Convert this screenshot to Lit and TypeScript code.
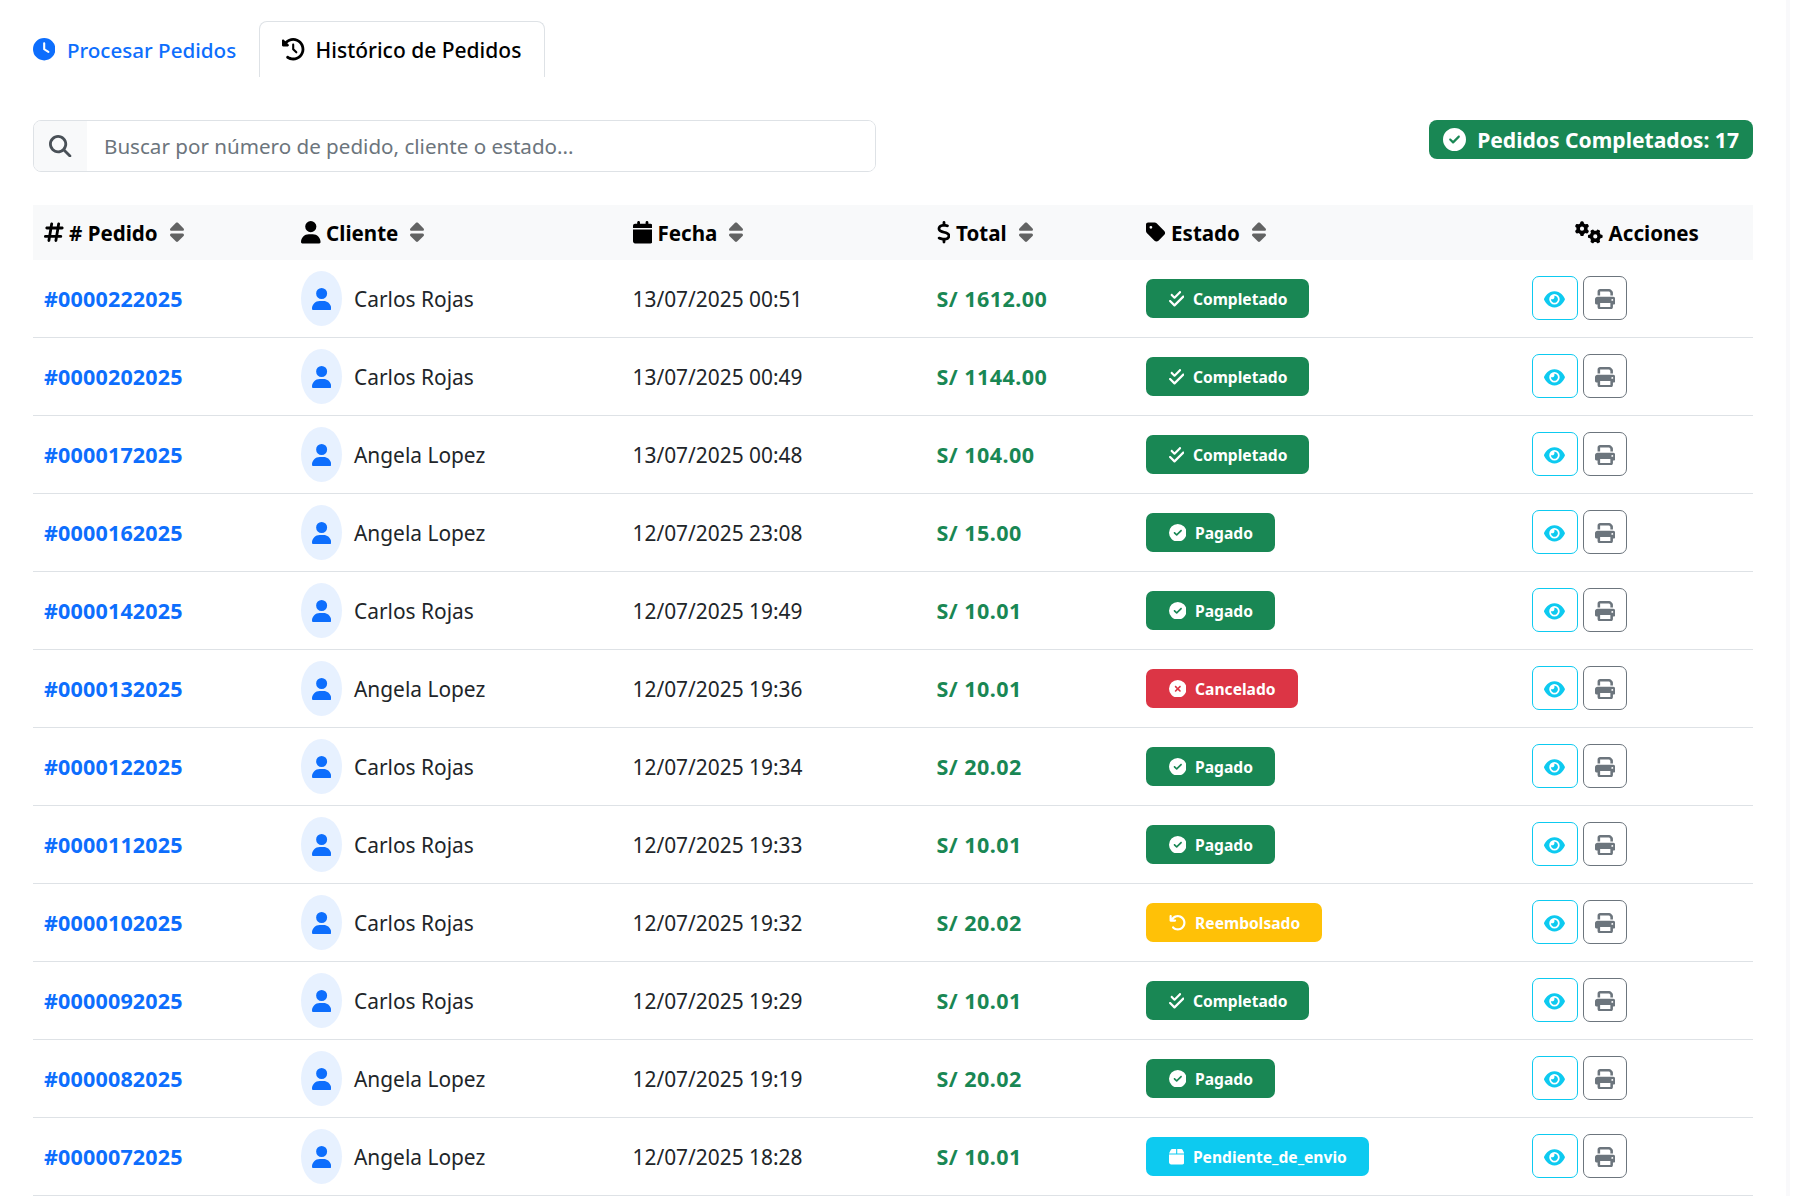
import { LitElement, html, css, svg } from "lit";
import { customElement } from "lit/decorators.js";

type Ico = [number, string];
const I: Record<string, Ico> = {
  clock: [512, "M256 0a256 256 0 1 1 0 512A256 256 0 1 1 256 0zM232 120V256c0 8 4 15.5 10.7 20l96 64c11 7.4 25.9 4.4 33.3-6.7s4.4-25.9-6.7-33.3L280 243.2V120c0-13.3-10.7-24-24-24s-24 10.7-24 24z"],
  history: [512, "M75 75L41 41C25.9 25.9 0 36.6 0 57.9V168c0 13.3 10.7 24 24 24H134.1c21.4 0 32.1-25.9 17-41l-30.8-30.8C155 85.5 203 64 256 64c106 0 192 86 192 192s-86 192-192 192c-40.8 0-78.6-12.7-109.7-34.4c-14.5-10.1-34.4-6.6-44.6 7.9s-6.6 34.4 7.9 44.6C151.2 495 201.7 512 256 512c141.4 0 256-114.6 256-256S397.4 0 256 0C185.3 0 121.3 28.7 75 75zm181 53c-13.3 0-24 10.7-24 24V256c0 6.4 2.5 12.5 7 17l72 72c9.4 9.4 24.6 9.4 33.9 0s9.4-24.6 0-33.9l-65-65V152c0-13.3-10.7-24-24-24z"],
  search: [512, "M416 208c0 45.9-14.9 88.3-40 122.7L502.6 457.4c12.5 12.5 12.5 32.8 0 45.3s-32.8 12.5-45.3 0L330.7 376c-34.4 25.2-76.8 40-122.7 40C93.1 416 0 322.9 0 208S93.1 0 208 0S416 93.1 416 208zM208 352a144 144 0 1 0 0-288 144 144 0 1 0 0 288z"],
  hash: [448, "M181.3 32.4c17.4 2.9 29.2 19.4 26.3 36.8L197.8 128h95.1l11.5-69.3c2.9-17.4 19.4-29.2 36.8-26.3s29.2 19.4 26.3 36.8L357.8 128H416c17.7 0 32 14.3 32 32s-14.3 32-32 32H347.1L325.8 320H384c17.7 0 32 14.3 32 32s-14.3 32-32 32H315.1l-11.5 69.3c-2.9 17.4-19.4 29.2-36.8 26.3s-29.2-19.4-26.3-36.8l9.8-58.7H155.1l-11.5 69.3c-2.9 17.4-19.4 29.2-36.8 26.3s-29.2-19.4-26.3-36.8L90.2 384H32c-17.7 0-32-14.3-32-32s14.3-32 32-32h68.9l21.3-128H64c-17.7 0-32-14.3-32-32s14.3-32 32-32h68.9l11.5-69.3c2.9-17.4 19.4-29.2 36.8-26.3zM187.1 192L165.8 320h95.1l21.3-128H187.1z"],
  user: [448, "M224 256A128 128 0 1 0 224 0a128 128 0 1 0 0 256zm-45.7 48C79.8 304 0 383.8 0 482.3C0 498.7 13.3 512 29.7 512H418.3c16.4 0 29.7-13.3 29.7-29.7C448 383.8 368.2 304 269.7 304H178.3z"],
  calendar: [448, "M96 32V64H48C21.5 64 0 85.5 0 112v48H448V112c0-26.5-21.5-48-48-48H352V32c0-17.7-14.3-32-32-32s-32 14.3-32 32V64H160V32c0-17.7-14.3-32-32-32S96 14.3 96 32zM448 192H0V464c0 26.5 21.5 48 48 48H400c26.5 0 48-21.5 48-48V192z"],
  dollar: [320, "M160 0c17.7 0 32 14.3 32 32V67.7c1.6 .2 3.1 .4 4.7 .7c.4 .1 .7 .1 1.1 .2l48 8.8c17.4 3.2 28.9 19.9 25.7 37.2s-19.9 28.9-37.2 25.7l-47.5-8.7c-31.3-4.6-58.9-1.5-78.3 6.2s-27.2 18.3-29 28.1c-2 10.7-.5 16.7 1.2 20.4c1.8 3.9 5.5 8.3 12.8 13.2c16.3 10.7 41.3 17.7 73.7 26.3l2.9 .8c28.6 7.6 63.6 16.8 89.6 33.8c14.2 9.3 27.6 21.9 35.9 39.5c8.5 17.9 10.3 37.9 6.4 59.2c-6.9 38-33.1 63.4-65.6 76.7c-13.7 5.6-28.6 9.2-44.4 11V480c0 17.7-14.3 32-32 32s-32-14.3-32-32V445.1c-.4-.1-.9-.1-1.3-.2l-.2 0 0 0c-24.4-3.8-64.5-14.3-91.5-26.3c-16.1-7.2-23.4-26.1-16.2-42.2s26.1-23.4 42.2-16.2c20.9 9.3 55.3 18.5 75.2 21.6c31.9 4.7 58.2 2 76-5.3c16.9-6.9 24.6-16.9 26.8-28.9c1.9-10.6 .4-16.7-1.3-20.4c-1.9-4-5.6-8.4-13-13.3c-16.4-10.7-41.5-17.7-74-26.3l-2.8-.7 0 0C119.4 279.3 84.4 270 58.4 253c-14.2-9.3-27.5-22-35.8-39.6c-8.4-17.9-10.1-37.9-6.1-59.2C23.7 116 52.3 91.2 84.8 78.3c13.3-5.3 27.9-8.9 43.2-11V32c0-17.7 14.3-32 32-32z"],
  tag: [448, "M0 80V229.5c0 17 6.7 33.3 18.7 45.3l176 176c25 25 65.5 25 90.5 0L418.7 317.3c25-25 25-65.5 0-90.5l-176-176c-12-12-28.3-18.7-45.3-18.7H48C21.5 32 0 53.5 0 80zm112 32a32 32 0 1 1 0 64 32 32 0 1 1 0-64z"],
  gears: [640, "M308.5 135.3c7.1-6.3 9.9-16.2 6.2-25c-2.3-5.3-4.8-10.5-7.6-15.5L304 89.4c-3-5-6.3-9.9-9.8-14.6c-5.7-7.6-15.7-10.1-24.7-7.1l-28.2 9.3c-10.7-8.8-23-16-36.2-20.9L199 27.1c-1.9-9.3-9.1-16.7-18.5-17.8C173.9 8.4 167.2 8 160.4 8h-.7c-6.8 0-13.5 .4-20.1 1.2c-9.4 1.1-16.6 8.6-18.5 17.8L115 56.1c-13.3 5-25.5 12.1-36.2 20.9L50.5 67.8c-9-3-19-.5-24.7 7.1c-3.5 4.7-6.8 9.6-9.9 14.6l-3 5.3c-2.8 5-5.3 10.2-7.6 15.6c-3.7 8.7-.9 18.6 6.2 25l22.2 19.8C32.6 161.9 32 168.9 32 176s.6 14.1 1.7 20.9L11.5 216.7c-7.1 6.3-9.9 16.2-6.2 25c2.3 5.3 4.8 10.5 7.6 15.6l3 5.2c3 5.1 6.3 9.9 9.9 14.6c5.7 7.6 15.7 10.1 24.7 7.1l28.2-9.3c10.7 8.8 23 16 36.2 20.9l6.1 29.1c1.9 9.3 9.1 16.7 18.5 17.8c6.7 .8 13.5 1.2 20.4 1.2s13.7-.4 20.4-1.2c9.4-1.1 16.6-8.6 18.5-17.8l6.1-29.1c13.3-5 25.5-12.1 36.2-20.9l28.2 9.3c9 3 19 .5 24.7-7.1c3.5-4.7 6.8-9.5 9.8-14.6l3.1-5.4c2.8-5 5.3-10.2 7.6-15.5c3.7-8.7 .9-18.6-6.2-25l-22.2-19.8c1.1-6.8 1.7-13.8 1.7-20.9s-.6-14.1-1.7-20.9l22.2-19.8zM112 176a48 48 0 1 1 96 0 48 48 0 1 1 -96 0zM504.7 500.5c6.3 7.1 16.2 9.9 25 6.2c5.3-2.3 10.5-4.8 15.5-7.6l5.4-3.1c5-3 9.9-6.3 14.6-9.8c7.6-5.7 10.1-15.7 7.1-24.7l-9.3-28.2c8.8-10.7 16-23 20.9-36.2l29.1-6.1c9.3-1.9 16.7-9.1 17.8-18.5c.8-6.7 1.2-13.5 1.2-20.4s-.4-13.7-1.2-20.4c-1.1-9.4-8.6-16.6-17.8-18.5L583.9 307c-5-13.3-12.1-25.5-20.9-36.2l9.3-28.2c3-9 .5-19-7.1-24.7c-4.7-3.5-9.6-6.8-14.6-9.9l-5.3-3c-5-2.8-10.2-5.3-15.6-7.6c-8.7-3.7-18.6-.9-25 6.2l-19.8 22.2c-6.8-1.1-13.8-1.7-20.9-1.7s-14.1 .6-20.9 1.7l-19.8-22.2c-6.3-7.1-16.2-9.9-25-6.2c-5.3 2.3-10.5 4.8-15.6 7.6l-5.2 3c-5.1 3-9.9 6.3-14.6 9.9c-7.6 5.7-10.1 15.7-7.1 24.7l9.3 28.2c-8.8 10.7-16 23-20.9 36.2L315.1 313c-9.3 1.9-16.7 9.1-17.8 18.5c-.8 6.7-1.2 13.5-1.2 20.4s.4 13.7 1.2 20.4c1.1 9.4 8.6 16.6 17.8 18.5l29.1 6.1c5 13.3 12.1 25.5 20.9 36.2l-9.3 28.2c-3 9-.5 19 7.1 24.7c4.7 3.5 9.5 6.8 14.6 9.8l5.4 3.1c5 2.8 10.2 5.3 15.5 7.6c8.7 3.7 18.6 .9 25-6.2l19.8-22.2c6.8 1.1 13.8 1.7 20.9 1.7s14.1-.6 20.9-1.7l19.8 22.2zM464 304a48 48 0 1 1 0 96 48 48 0 1 1 0-96z"],
  sort: [320, "M137.4 41.4c12.5-12.5 32.8-12.5 45.3 0l128 128c9.2 9.2 11.9 22.9 6.9 34.9s-16.6 19.8-29.6 19.8H32c-12.9 0-24.6-7.8-29.6-19.8s-2.2-25.7 6.9-34.9l128-128zm0 429.3l-128-128c-9.2-9.2-11.9-22.9-6.9-34.9s16.6-19.8 29.6-19.8H288c12.9 0 24.6 7.8 29.6 19.8s2.2 25.7-6.9 34.9l-128 128c-12.5 12.5-32.8 12.5-45.3 0z"],
  eye: [576, "M288 32c-80.8 0-145.5 36.8-192.6 80.6C48.6 156 17.3 208 2.5 243.7c-3.3 7.9-3.3 16.7 0 24.6C17.3 304 48.6 356 95.4 399.4C142.5 443.2 207.2 480 288 480s145.5-36.8 192.6-80.6c46.8-43.5 78.1-95.4 93-131.1c3.3-7.9 3.3-16.7 0-24.6c-14.9-35.7-46.2-87.7-93-131.1C433.5 68.8 368.8 32 288 32zM144 256a144 144 0 1 1 288 0 144 144 0 1 1 -288 0zm144-64c0 35.3-28.7 64-64 64c-7.1 0-13.9-1.2-20.3-3.3c-5.5-1.8-11.9 1.6-11.7 7.4c.3 6.9 1.3 13.8 3.2 20.7c13.7 51.2 66.4 81.6 117.6 67.9s81.6-66.4 67.9-117.6c-11.1-41.5-47.8-69.4-88.6-71.1c-5.8-.2-9.2 6.1-7.4 11.7c2.1 6.4 3.3 13.2 3.3 20.3z"],
  print: [512, "M128 0C92.7 0 64 28.7 64 64v96h64V64H354.7L384 93.3V160h64V93.3c0-17-6.7-33.3-18.7-45.3L400 18.7C388 6.7 371.7 0 354.7 0H128zM384 352v32 64H128V384 368 352H384zm64 32h32c17.7 0 32-14.3 32-32V256c0-35.3-28.7-64-64-64H64c-35.3 0-64 28.7-64 64v96c0 17.7 14.3 32 32 32H64v64c0 35.3 28.7 64 64 64H384c35.3 0 64-28.7 64-64V384zM432 248a24 24 0 1 1 0 48 24 24 0 1 1 0-48z"],
  circleCheck: [512, "M256 512A256 256 0 1 0 256 0a256 256 0 1 0 0 512zM369 209L241 337c-9.4 9.4-24.6 9.4-33.9 0l-64-64c-9.4-9.4-9.4-24.6 0-33.9s24.6-9.4 33.9 0l47 47L335 175c9.4-9.4 24.6-9.4 33.9 0s9.4 24.6 0 33.9z"],
  circleX: [512, "M256 512A256 256 0 1 0 256 0a256 256 0 1 0 0 512zM175 175c9.4-9.4 24.6-9.4 33.9 0l47 47 47-47c9.4-9.4 24.6-9.4 33.9 0s9.4 24.6 0 33.9l-47 47 47 47c9.4 9.4 9.4 24.6 0 33.9s-24.6 9.4-33.9 0l-47-47-47 47c-9.4 9.4-24.6 9.4-33.9 0s-9.4-24.6 0-33.9l47-47-47-47c-9.4-9.4-9.4-24.6 0-33.9z"],
  checkDouble: [448, "M342.6 86.6c12.5-12.5 12.5-32.8 0-45.3s-32.8-12.5-45.3 0L160 178.7l-57.4-57.4c-12.5-12.5-32.8-12.5-45.3 0s-12.5 32.8 0 45.3l80 80c12.5 12.5 32.8 12.5 45.3 0l160-160zm96 128c12.5-12.5 12.5-32.8 0-45.3s-32.8-12.5-45.3 0L160 402.7 54.6 297.4c-12.5-12.5-32.8-12.5-45.3 0s-12.5 32.8 0 45.3l128 128c12.5 12.5 32.8 12.5 45.3 0l256-256z"],
  undo: [512, "M125.7 160H176c17.7 0 32 14.3 32 32s-14.3 32-32 32H48c-17.7 0-32-14.3-32-32V64c0-17.7 14.3-32 32-32s32 14.3 32 32v51.2L97.6 97.6c87.5-87.5 229.3-87.5 316.8 0s87.5 229.3 0 316.8s-229.3 87.5-316.8 0c-12.5-12.5-12.5-32.8 0-45.3s32.8-12.5 45.3 0c62.5 62.5 163.8 62.5 226.3 0s62.5-163.8 0-226.3s-163.8-62.5-226.3 0L125.7 160z"],
  box: [448, "M50.7 58.5L0 160H208V32H93.7C75.5 32 58.9 42.3 50.7 58.5zM240 160H448L397.3 58.5C389.1 42.3 372.5 32 354.3 32H240V160zm208 32H0V416c0 35.3 28.7 64 64 64H384c35.3 0 64-28.7 64-64V192z"],
};

const icon = (name: string) => {
  const [w, d] = I[name];
  return html`<svg class="ico" viewBox="0 0 ${w} 512" aria-hidden="true">${svg`<path fill="currentColor" d=${d}></path>`}</svg>`;
};

const STATUS: Record<string, { cls: string; ico: string; label: string }> = {
  c: { cls: "success", ico: "checkDouble", label: "Completado" },
  p: { cls: "success", ico: "circleCheck", label: "Pagado" },
  x: { cls: "danger", ico: "circleX", label: "Cancelado" },
  r: { cls: "warning", ico: "undo", label: "Reembolsado" },
  e: { cls: "info", ico: "box", label: "Pendiente_de_envio" },
};

const C = "Carlos Rojas";
const A = "Angela Lopez";
const ROWS: [string, string, string, string, string][] = [
  ["#0000222025", C, "13/07/2025 00:51", "S/ 1612.00", "c"],
  ["#0000202025", C, "13/07/2025 00:49", "S/ 1144.00", "c"],
  ["#0000172025", A, "13/07/2025 00:48", "S/ 104.00", "c"],
  ["#0000162025", A, "12/07/2025 23:08", "S/ 15.00", "p"],
  ["#0000142025", C, "12/07/2025 19:49", "S/ 10.01", "p"],
  ["#0000132025", A, "12/07/2025 19:36", "S/ 10.01", "x"],
  ["#0000122025", C, "12/07/2025 19:34", "S/ 20.02", "p"],
  ["#0000112025", C, "12/07/2025 19:33", "S/ 10.01", "p"],
  ["#0000102025", C, "12/07/2025 19:32", "S/ 20.02", "r"],
  ["#0000092025", C, "12/07/2025 19:29", "S/ 10.01", "c"],
  ["#0000082025", A, "12/07/2025 19:19", "S/ 20.02", "p"],
  ["#0000072025", A, "12/07/2025 18:28", "S/ 10.01", "e"],
];

const HEAD: [string, string][] = [
  ["hash", "# Pedido"],
  ["user", "Cliente"],
  ["calendar", "Fecha"],
  ["dollar", "Total"],
  ["tag", "Estado"],
];

@customElement("app-root")
export class AppRoot extends LitElement {
  static styles = css`
    :host {
      display: flex;
      font-family: "Noto Sans", "Open Sans", sans-serif;
      font-size: 20.9px;
      color: #212529;
      background: #fff;
      overflow: hidden;
    }
    .page { width: 1786px; flex: none; box-sizing: border-box; padding: 21px 33px 0; }
    .strip { width: 4px; background: #f9f9fb; }
    .ico { height: 22.4px; width: auto; display: block; flex: none; }

    .tabs { display: flex; height: 56px; }
    .tab {
      display: flex; align-items: center; gap: 11px;
      font-size: 21px; font-weight: 500; border: 1px solid transparent; border-bottom: 0;
      border-radius: 8px 8px 0 0; padding: 0 22.5px 0 22px;
      color: #0d6efd;
    }
    .tab.first { border-left: 0; padding-left: 0; padding-right: 22px; gap: 11.5px; font-size: 20.6px; }
    .tab.active { color: #000; border-color: #dee2e6; background: #fff; }

    .toolbar { display: flex; justify-content: space-between; align-items: flex-start; margin-top: 43px; }
    .search {
      display: flex; width: 843px; height: 52px; box-sizing: border-box;
      border: 1px solid #dee2e6; border-radius: 8px; overflow: hidden;
    }
    .search-ico {
      width: 53px; background: #f8f9fa; color: #495057;
      display: flex; align-items: center; justify-content: center;
    }
    .search input {
      flex: 1; min-width: 0; border: 0; outline: 0; padding: 0 17px;
      font: inherit; font-size: 20.6px; color: #212529; background: #fff;
    }
    .search input::placeholder { color: #6c757d; opacity: 1; }
    .pill {
      display: flex; align-items: center; gap: 11.5px; height: 39px;
      padding: 0 14px; border-radius: 8px; background: #198754; color: #fff;
      font-weight: 700; font-size: 21.1px; white-space: nowrap;
    }
    .pill .ico { height: 23px; }

    table { width: 1720px; margin-top: 33px; border-collapse: collapse; table-layout: fixed; }
    th { height: 55px; padding: 0 11px; background: #f8f9fa; color: #000; font-weight: 700; font-size: 20.55px; text-align: left; }
    td { height: 77px; padding: 0 11px; border-bottom: 1px solid #dee2e6; }
    .th { display: flex; align-items: center; gap: 5.5px; white-space: nowrap; }
    .th.center { justify-content: center; }
    .sort { margin-left: 6.5px; opacity: .6; }

    .oid { color: #0d6efd; font-weight: 700; font-size: 21.5px; letter-spacing: .17px; }
    .who { display: flex; align-items: center; gap: 12px; }
    .avatar {
      width: 41px; height: 55px; border-radius: 50%; background: #e7f1ff; color: #0d6efd;
      display: flex; align-items: center; justify-content: center;
    }
    .avatar .ico { height: 22px; }
    .total { color: #198754; font-weight: 700; font-size: 21.5px; letter-spacing: .45px; }

    .badge {
      display: inline-flex; align-items: center; gap: 9px; height: 39px; box-sizing: border-box;
      padding: 0 22px 0 22.5px; border-radius: 7px; color: #fff; font-weight: 700; font-size: 15.6px;
      white-space: nowrap; vertical-align: middle;
    }
    .badge .ico { height: 17.6px; }
    .success { background: #198754; }
    .danger { background: #dc3545; }
    .warning { background: #ffc107; }
    .info { background: #0dcaf0; }

    .actions { display: flex; gap: 5.5px; margin-bottom: 1px; }
    .btn {
      height: 44px; width: 44px; padding: 2px 0 0; box-sizing: border-box; background: #fff;
      border: 1px solid #6c757d; border-radius: 7px; color: #6c757d;
      display: flex; align-items: center; justify-content: center;
    }
    .btn.view { width: 45.5px; border-color: #0dcaf0; color: #0dcaf0; }
    .btn .ico { height: 20.5px; }
    .btn.view .ico { height: 18.6px; }
  `;

  render() {
    return html`
      <div class="page">
        <nav class="tabs">
          <div class="tab first">${icon("clock")}<span>Procesar Pedidos</span></div>
          <div class="tab active">${icon("history")}<span>Histórico de Pedidos</span></div>
        </nav>
        <div class="toolbar">
          <label class="search">
            <span class="search-ico">${icon("search")}</span>
            <input type="text" placeholder="Buscar por número de pedido, cliente o estado..." />
          </label>
          <div class="pill">${icon("circleCheck")}<span>Pedidos Completados: 17</span></div>
        </div>
        <table>
          <colgroup>
            <col style="width:257px" /><col style="width:331.5px" /><col style="width:304px" />
            <col style="width:209.5px" /><col style="width:386px" /><col style="width:232px" />
          </colgroup>
          <thead>
            <tr>
              ${HEAD.map(([ico, label]) => html`<th><div class="th">${icon(ico)}<span>${label}</span><span class="sort">${icon("sort")}</span></div></th>`)}
              <th><div class="th center">${icon("gears")}<span>Acciones</span></div></th>
            </tr>
          </thead>
          <tbody>
            ${ROWS.map(([id, name, date, total, st]) => {
              const s = STATUS[st];
              return html`<tr>
                <td><span class="oid">${id}</span></td>
                <td><div class="who"><span class="avatar">${icon("user")}</span><span>${name}</span></div></td>
                <td>${date}</td>
                <td><span class="total">${total}</span></td>
                <td><span class="badge ${s.cls}">${icon(s.ico)}<span>${s.label}</span></span></td>
                <td><div class="actions">
                  <button class="btn view">${icon("eye")}</button>
                  <button class="btn">${icon("print")}</button>
                </div></td>
              </tr>`;
            })}
          </tbody>
        </table>
      </div>
      <div class="strip"></div>
    `;
  }
}
